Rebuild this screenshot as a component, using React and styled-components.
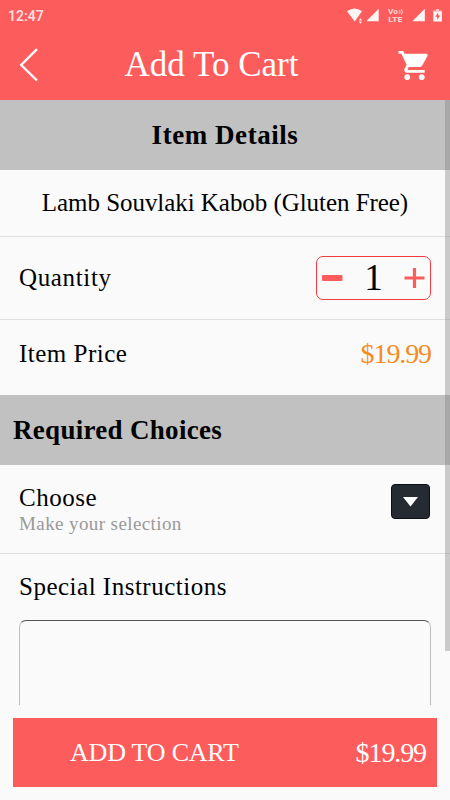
import React, { useState } from "react";
import styled, { createGlobalStyle } from "styled-components";
import { MdShoppingCart } from "react-icons/md";

const GlobalStyle = createGlobalStyle`
  * {
    box-sizing: border-box;
  }

  body {
    margin: 0;
    background: #fafafa;
    font-family: "Liberation Serif", serif;
    color: #000;
  }

  svg {
    display: block;
  }
`;

const Screen = styled.div`
  display: flex;
  flex-direction: column;
  width: 450px;
  height: 800px;
  overflow: hidden;
  background: #fafafa;
`;

const Header = styled.header`
  flex: none;
  height: 100px;
  background: #fd5c5c;
  color: #fff;
`;

const StatusBar = styled.div`
  display: flex;
  justify-content: space-between;
  height: 31px;
  padding: 0 8px;
  font-family: Roboto, sans-serif;
  font-size: 14px;
  font-weight: 600;
  line-height: 32px;
  color: #ffdede;
`;

const NavBar = styled.div`
  display: flex;
  align-items: center;
  justify-content: space-between;
  height: 68px;
  padding: 0 18px 0 19px;
`;

const IconButton = styled.button`
  padding: 0;
  border: 0;
  background: none;
  color: inherit;
  cursor: pointer;
`;

const Label = styled.span`
  font-size: ${({ $size }) => $size || 25}px;
  font-weight: ${({ $bold }) => ($bold ? "bold" : "normal")};
  letter-spacing: ${({ $spacing }) => $spacing || 0}px;
  line-height: ${({ $line }) => $line || 30}px;
  color: ${({ $color }) => $color || "inherit"};
  white-space: nowrap;
`;

const Title = styled(Label)`
  padding: 0 15px 0 0;
  line-height: 40px;
`;

const Content = styled.main`
  position: relative;
  flex: none;
  height: 605px;
  overflow: hidden;
`;

const Scrollbar = styled.div`
  position: absolute;
  top: 0;
  right: 0;
  width: 5px;
  height: 551px;
  background: rgba(130, 130, 130, 0.4);
`;

const Band = styled.div`
  display: flex;
  align-items: center;
  justify-content: ${({ $center }) => ($center ? "center" : "flex-start")};
  height: 70px;
  padding: 0 13px;
  background: #c1c1c1;
`;

const Row = styled.div`
  display: flex;
  align-items: center;
  justify-content: ${({ $center }) => ($center ? "center" : "space-between")};
  height: ${({ $height }) => $height}px;
  padding: 0 19px;
  border-bottom: 1px solid #dedede;
`;

const PriceRow = styled(Row)`
  padding-bottom: 8px;
  border-bottom: 0;
`;

const Stepper = styled.div`
  display: flex;
  align-items: center;
  justify-content: space-between;
  width: 115px;
  height: 44px;
  padding: 0 5px;
  border: 1px solid #f53a3f;
  border-radius: 7px;
`;

const Choice = styled.div`
  display: flex;
  flex-direction: column;
  padding-top: 2px;
`;

const Dropdown = styled.button`
  display: flex;
  align-items: center;
  justify-content: center;
  width: 39px;
  height: 35px;
  margin: 0 1px 15px 0;
  padding: 0;
  border: 1px solid #0c1014;
  border-radius: 4px;
  background: #262b31;
`;

const Instructions = styled.section`
  display: flex;
  flex-direction: column;
  gap: 18px;
  padding: 18px 19px 0;
`;

const NoteBox = styled.textarea`
  height: 140px;
  margin: 0;
  padding: 12px;
  border: 1px solid #bdbdbd;
  border-top-color: #555;
  border-radius: 7px;
  outline: 0;
  resize: none;
  background: transparent;
  font: 20px "Liberation Serif", serif;
`;

const Footer = styled.footer`
  padding: 13px;
`;

const CartButton = styled.button`
  display: flex;
  align-items: center;
  justify-content: space-between;
  width: 424px;
  height: 69px;
  padding: 0 11px 0 57px;
  border: 0;
  background: #fd5c5c;
  color: #fff;
  font-family: inherit;
`;

const StatusIcons = () => (
  <svg width="100" height="31" viewBox="342 0 100 31" fill="#fff4f4">
    <path d="M347 11.2Q354.5 5.8 362 11.2L354.7 21.5Z" />
    <path d="M360.4 18.2l1.6 2.3h-3.2zM360.4 23.8l1.6-2.3h-3.2z" />
    <path d="M366.3 21.3h12.4V8.8z" />
    <path d="M412.3 21.3h12.5V8.8z" />
    <g fill="#ffdada" fontFamily="Roboto, sans-serif" fontWeight="700" fontSize="7">
      <text x="388" y="14" textLength="10" lengthAdjust="spacingAndGlyphs">Vo</text>
      <text x="388.2" y="22.3" textLength="14.5" lengthAdjust="spacingAndGlyphs">LTE</text>
    </g>
    <path d="M399.4 9.9q1.4 1.8 0 3.8M401.4 9q2 2.7 0 5.6" fill="none" stroke="#ffdada" />
    <path d="M436 9h3v1.5h3V12h-9v-1.5h3z" fill="#ffc5c5" />
    <path d="M433.3 12h8.6v9.5h-8.6z" />
    <path d="M438.2 12.5l-3 4.2h2v3l3-4.2h-2z" fill="#f65353" />
  </svg>
);

const BackIcon = () => (
  <svg width="22" height="34" viewBox="0 0 22 34" fill="none" stroke="#fff" strokeWidth="2.4">
    <path d="M18 1.2L2.2 17 18 32.5" />
  </svg>
);

const App = () => {
  const [quantity, setQuantity] = useState(1);
  const price = `$${(19.99 * quantity).toFixed(2)}`;

  return (
    <Screen>
      <GlobalStyle />
      <Header>
        <StatusBar>
          <span>12:47</span>
          <StatusIcons />
        </StatusBar>
        <NavBar>
          <IconButton aria-label="Back"><BackIcon /></IconButton>
          <Title $size={35}>Add To Cart</Title>
          <IconButton aria-label="Cart"><MdShoppingCart size={35} /></IconButton>
        </NavBar>
      </Header>
      <Content>
        <Band $center>
          <Label $bold $size={27} $spacing={0.55}>Item Details</Label>
        </Band>
        <Row $center $height={67}>
          <Label $spacing={-0.05}>Lamb Souvlaki Kabob (Gluten Free)</Label>
        </Row>
        <Row $height={83}>
          <Label $spacing={0.65}>Quantity</Label>
          <Stepper>
            <IconButton aria-label="Less" onClick={() => setQuantity(Math.max(1, quantity - 1))}>
              <svg width="21" height="22" viewBox="0 0 21 22">
                <rect y="8" width="20.5" height="6" rx="1" fill="#fd5c5c" />
              </svg>
            </IconButton>
            <Label $size={37}>{quantity}</Label>
            <IconButton aria-label="More" onClick={() => setQuantity(quantity + 1)}>
              <svg width="21" height="22" viewBox="0 0 21 22">
                <path d="M.5 11h20M10.5 1v20" stroke="#fd5c5c" strokeWidth="3.2" />
              </svg>
            </IconButton>
          </Stepper>
        </Row>
        <PriceRow $height={75}>
          <Label $spacing={0.5} $line={32}>Item Price</Label>
          <Label $size={28} $spacing={-1.1} $color="#f68b1f">{price}</Label>
        </PriceRow>
        <Band>
          <Label $bold $size={27} $spacing={0.3}>Required Choices</Label>
        </Band>
        <Row $height={89}>
          <Choice>
            <Label $spacing={0.5} $line={28}>Choose</Label>
            <Label $size={19} $spacing={0.4} $line={24} $color="#999">Make your selection</Label>
          </Choice>
          <Dropdown aria-label="Choose an option">
            <svg width="15" height="10" viewBox="0 0 15 10">
              <path d="M0 0h15L7.5 9.5z" fill="#fff" />
            </svg>
          </Dropdown>
        </Row>
        <Instructions>
          <Label $spacing={0.5}>Special Instructions</Label>
          <NoteBox aria-label="Special Instructions" />
        </Instructions>
        <Scrollbar />
      </Content>
      <Footer>
        <CartButton>
          <Label $size={26} $spacing={-0.2}>ADD TO CART</Label>
          <Label $size={28} $spacing={-1.1}>{price}</Label>
        </CartButton>
      </Footer>
    </Screen>
  );
};

export default App;
